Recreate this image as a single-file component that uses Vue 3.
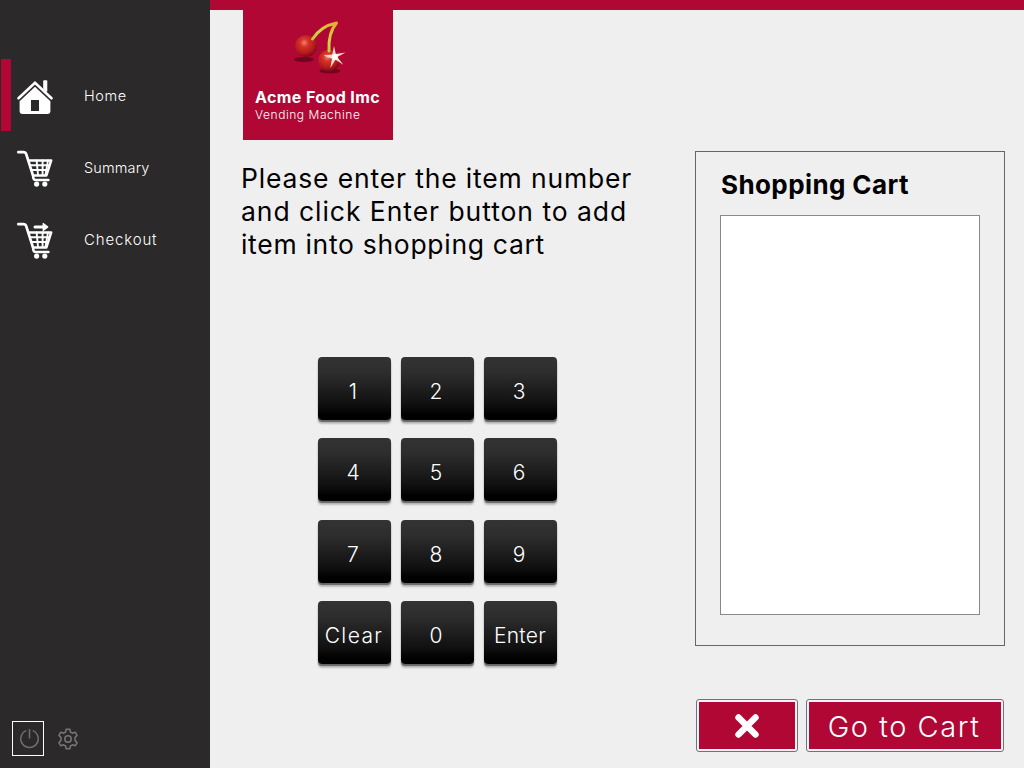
<script setup>
const nav = [
  { label: 'Home', icon: 'home', active: true },
  { label: 'Summary', icon: 'cart' },
  { label: 'Checkout', icon: 'checkout' },
]
const keys = ['1', '2', '3', '4', '5', '6', '7', '8', '9', 'Clear', '0', 'Enter']
</script>

<template>
  <div class="screen">
    <aside class="sidebar">
      <nav>
        <a v-for="item in nav" :key="item.label" class="nav-item" :class="[item.icon, { active: item.active }]">
          <svg v-if="item.icon === 'home'" class="nav-icon" viewBox="0 0 36 36">
            <path d="M27 1h2.5v10L27 8.5z" fill="#fff" stroke="#fff" stroke-width="1.6" stroke-linejoin="round" />
            <path d="M1.5 18.3 18 2.7l16.5 15.6" fill="none" stroke="#fff" stroke-width="2.6" stroke-linecap="round" stroke-linejoin="miter" />
            <path fill-rule="evenodd" d="M18 6.8 33.4 21.2V31q0 3-3 3H5.6q-3 0-3-3V21.2zM14 20v11h8V20z" fill="#fff" />
          </svg>
          <svg v-else class="nav-icon" viewBox="0 0 36 36" fill="none" stroke="#fff" stroke-linecap="round" stroke-linejoin="round">
            <g transform="translate(0 -1.6)">
              <path d="M1.3 1.8h5.2q2 0 2.8 2.2l6.5 20.5" stroke-width="2.7" />
              <path d="M12 10h22.2l-4.8 15H16M16 25q0 4.7 3 4.7h12.4" stroke-width="2.5" />
              <path d="M14 14.8h18M15.2 19.6h16M19.6 10l1.4 14.5M25.6 10v14.5M31 10l-2.5 14.5" stroke-width="1.9" />
              <g fill="#fff" stroke="none"><circle cx="19.6" cy="33.7" r="2.6" /><circle cx="27.8" cy="33.7" r="2.6" /></g>
              <g v-if="item.icon === 'checkout'">
                <path d="M18 4.6h9" stroke-width="3" />
                <path d="m26.2 1 4.6 3.6-4.6 3.6z" fill="#fff" stroke-width="1.2" />
              </g>
            </g>
          </svg>
          <span>{{ item.label }}</span>
        </a>
      </nav>
      <div class="tools">
        <button class="power" aria-label="Power">
          <svg width="22" height="22" viewBox="0 0 22 22" fill="none" stroke="#707070" stroke-width="1.5">
            <path d="M8.3 2.6a8.7 8.7 0 1 0 6.4 0M11.5 1v9.5" />
          </svg>
        </button>
        <svg class="gear" width="22" height="22" viewBox="0 0 22 22" fill="none" stroke="#777" stroke-width="1.5" stroke-linejoin="round">
          <path d="M9.2 1.2h3.6l.6 2.8 2 1.2 2.8-1 1.9 3.2L18 9.5v3l2.1 2.1-1.9 3.2-2.8-1-2 1.2-.6 2.8H9.2L8.6 18l-2-1.2-2.8 1-1.9-3.2L4 12.5v-3L1.9 7.4l1.9-3.2 2.8 1 2-1.2z" />
          <circle cx="11" cy="11" r="3.2" />
        </svg>
      </div>
    </aside>

    <main class="main">
      <div class="top-line"></div>
      <div class="body">
        <section class="left">
          <div class="brand">
            <svg class="cherries" width="56" height="58" viewBox="0 0 56 58">
              <defs>
                <radialGradient id="cherry" cx=".42" cy=".35" r=".65">
                  <stop offset="0" stop-color="#f08070" />
                  <stop offset=".3" stop-color="#d63229" />
                  <stop offset=".75" stop-color="#b31a1c" />
                  <stop offset="1" stop-color="#7c0b18" />
                </radialGradient>
                <linearGradient id="stem" x1="0" y1="1" x2="1" y2="0">
                  <stop offset="0" stop-color="#a5c62d" />
                  <stop offset=".5" stop-color="#d5d14b" />
                  <stop offset="1" stop-color="#e6a92c" />
                </linearGradient>
              </defs>
              <ellipse cx="12" cy="42.5" rx="10" ry="2.5" fill="#72041f" />
              <ellipse cx="38" cy="54" rx="10.5" ry="2.5" fill="#72041f" />
              <circle cx="14" cy="29" r="10.8" fill="url(#cherry)" />
              <circle cx="37" cy="43.5" r="10.8" fill="url(#cherry)" />
              <path d="M20.5 22Q29 9 44.5 6 36 16 37 34" fill="none" stroke="url(#stem)" stroke-width="3" stroke-linecap="round" stroke-linejoin="round" />
              <path d="m42 29 1.8 8 9.7-1.5-8.2 4.4 6 7.8-7.8-5-5.2 8.2 1.7-9.2-8.5-3.2 8.8-.9z" fill="#ffd8cf" />
              <circle cx="42.8" cy="40" r="3" fill="#fff" />
            </svg>
            <strong>Acme Food Imc</strong>
            <small>Vending Machine</small>
          </div>
          <p class="prompt">
            <span class="l1">Please enter the item number</span>
            <span class="l2">and click Enter button to add</span>
            <span class="l3">item into shopping cart</span>
          </p>
          <div class="keypad">
            <button v-for="k in keys" :key="k" class="key" :class="k.length > 1 ? k.toLowerCase() : ''">{{ k }}</button>
          </div>
        </section>

        <section class="right">
          <div class="cart-panel">
            <h2>Shopping Cart</h2>
            <div class="list"></div>
          </div>
          <div class="actions">
            <button class="action cancel" aria-label="Cancel">
              <svg width="26" height="26" viewBox="0 0 26 26">
                <path d="m4.5 4.5 17 17m0-17-17 17" stroke="#fff" stroke-width="6.4" stroke-linecap="round" />
              </svg>
            </button>
            <button class="action go"><span>Go to Cart</span></button>
          </div>
        </section>
      </div>
    </main>
  </div>
</template>

<style>
body { margin: 0; }
</style>

<style scoped>
* { box-sizing: border-box; }
.screen {
  display: flex;
  width: 1024px;
  height: 768px;
  overflow: hidden;
  background: #efefef;
  color: #000;
  font-family: "Century Gothic", Inter, Lato, sans-serif;
  font-weight: 300;
}
button { font: inherit; border: 0; padding: 0; margin: 0; }
.sidebar {
  width: 210px;
  padding: 59px 0 12px 1px;
  background: #2b2929;
  display: flex;
  flex-direction: column;
  justify-content: space-between;
}
.nav-item {
  display: flex;
  align-items: center;
  height: 72px;
  padding-left: 6px;
  border-left: 10px solid transparent;
  color: #fff;
  font-size: 14.5px;
}
.home { letter-spacing: .6px; }
.cart { letter-spacing: .15px; }
.checkout { font-size: 15px; letter-spacing: .85px; }
.nav-item.active { border-color: #b00735; }
.nav-icon { width: 36px; height: 36px; margin: 5px 31px 0 0; overflow: visible; }
.tools { display: flex; align-items: center; padding-left: 11px; }
.power {
  display: grid;
  place-items: center;
  width: 32px;
  height: 35px;
  border: 1px solid #fff;
  background: transparent;
}
.power svg { margin-left: 1px; }
.gear { margin-left: 12.5px; }
.main { flex: 1; display: flex; flex-direction: column; }
.top-line { height: 10px; background: #b00735; }
.body { flex: 1; display: flex; justify-content: space-between; padding: 0 19px 0 31px; }
.brand {
  display: flex;
  flex-direction: column;
  width: 150px;
  height: 130px;
  margin-left: 2px;
  padding: 7px 0 0 12px;
  background: #b00735;
  color: #fff;
}
.cherries { margin-left: 37px; }
.brand strong { margin-top: 12px; font-size: 16px; line-height: 20px; font-weight: 700; letter-spacing: .4px; white-space: nowrap; }
.brand small { font-size: 12px; line-height: 16px; letter-spacing: .55px; }
.prompt { margin: 22px 0 0; font-size: 26.5px; line-height: 33px; font-weight: 400; white-space: nowrap; }
.prompt span { display: block; }
.l1 { letter-spacing: .84px; }
.l2 { letter-spacing: .95px; }
.l3 { letter-spacing: .7px; }
.keypad {
  display: grid;
  grid-template-columns: repeat(3, 73px);
  grid-auto-rows: 63px;
  gap: 18.4px 10px;
  margin: 96px 0 0 77px;
}
.key {
  border-radius: 4px;
  background: linear-gradient(#333 0, #2d2d2d 25%, #101010 75%, #000 92%);
  box-shadow: 0 2px 1px #666, 0 4px 2px #bbb;
  color: #fff;
  font-size: 21px;
  line-height: 30px;
  padding: 7px 3px 0 0;
}
.clear { letter-spacing: 1.4px; padding-right: 1px; }
.enter { letter-spacing: .3px; padding-right: 1px; }
.right { width: 310px; padding-top: 141px; }
.cart-panel {
  height: 495px;
  padding: 17px 24px 30px;
  border: 1px solid #666;
  display: flex;
  flex-direction: column;
}
.cart-panel h2 { margin: 0 0 0 1px; font-size: 26px; line-height: 32px; font-weight: 700; letter-spacing: .4px; white-space: nowrap; }
.list { flex: 1; margin-top: 14px; background: #fff; border: 1px solid #888; }
.actions { display: flex; gap: 8px; margin: 53px 0 0 1px; }
.action {
  display: flex;
  align-items: center;
  justify-content: center;
  height: 53px;
  border: 1px solid #687878;
  border-radius: 3px;
  padding: 2px;
  background: #b00735;
  background-clip: content-box;
  box-shadow: inset 0 0 0 2px #f8f0f2;
  color: #fff;
  font-size: 29px;
}
.cancel { width: 102px; }
.go { width: 198px; white-space: nowrap; letter-spacing: 1.55px; }
.go span { padding: 2px 2px 0 0; }
</style>
